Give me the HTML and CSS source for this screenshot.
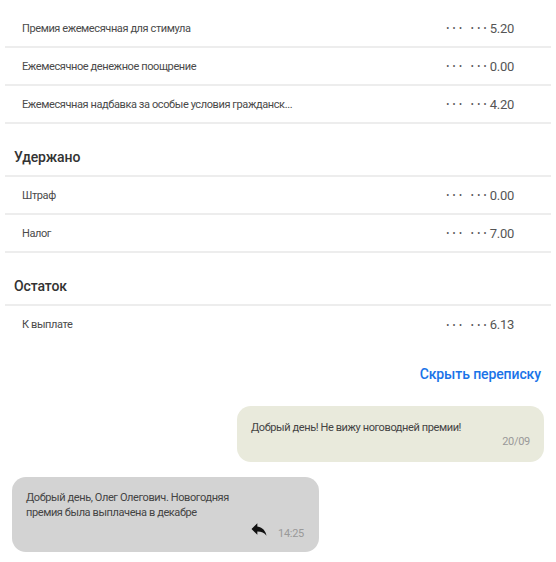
FILE: index.html
```html
<!DOCTYPE html>
<html lang="ru">
<head>
<meta charset="utf-8">
<link rel="stylesheet" href="styles.css">
</head>
<body>
<div class="page">
  <div class="list">
    <div class="row"><span class="label">Премия ежемесячная для стимула</span><span class="value"><span class="dots">••• •••</span>5.20</span></div>
    <div class="row"><span class="label">Ежемесячное денежное поощрение</span><span class="value"><span class="dots">••• •••</span>0.00</span></div>
    <div class="row"><span class="label">Ежемесячная надбавка за особые условия гражданск...</span><span class="value"><span class="dots">••• •••</span>4.20</span></div>
    <div class="heading">Удержано</div>
    <div class="row"><span class="label">Штраф</span><span class="value"><span class="dots">••• •••</span>0.00</span></div>
    <div class="row"><span class="label">Налог</span><span class="value"><span class="dots">••• •••</span>7.00</span></div>
    <div class="heading">Остаток</div>
    <div class="row last"><span class="label">К выплате</span><span class="value"><span class="dots">••• •••</span>6.13</span></div>
  </div>
  <div class="link-row"><a class="toggle">Скрыть переписку</a></div>
  <div class="chat">
    <div class="bubble out">
      <div class="text">Добрый день! Не вижу ноговодней премии!</div>
      <div class="meta"><span class="time">20/09</span></div>
    </div>
    <div class="bubble in">
      <div class="text narrow">Добрый день, Олег Олегович. Новогодняя премия была выплачена в декабре</div>
      <div class="meta">
        <svg class="reply" viewBox="0 0 24 24" width="20" height="20"><path d="M10 9V5l-7 7 7 7v-4.1c5 0 8.5 1.6 11 5.1-1-5-4-10-11-11z"/></svg>
        <span class="time">14:25</span>
      </div>
    </div>
  </div>
</div>
</body>
</html>
```
FILE: styles.css
```css
* { box-sizing: border-box; }
html, body { margin: 0; padding: 0; background: #fff; }
body { font-family: Roboto, "Noto Sans", sans-serif; color: #444; }
.page { width: 556px; padding: 10px 5px 0 5px; }
.list { display: flex; flex-direction: column; }
.row {
  height: 38px;
  display: flex;
  align-items: center;
  justify-content: space-between;
  padding: 0 37px 0 17px;
  border-bottom: 2px solid #ededed;
  font-size: 11px;
  letter-spacing: -0.4px;
}
.row.last { border-bottom: none; height: 37px; }
.label { color: #4a4a4a; }
.value { color: #555; font-size: 13px; letter-spacing: -0.3px; display: flex; align-items: center; }
.dots { font-size: 9px; letter-spacing: 3.3px; color: #555; }
.heading {
  padding: 23px 9px 8px;
  line-height: 20px;
  font-size: 14px;
  font-weight: 500;
  letter-spacing: -0.1px;
  color: #333;
  border-bottom: 2px solid #ededed;
}
.link-row { display: flex; justify-content: flex-end; padding: 20px 10px 0 0; }
.toggle { font-size: 14px; font-weight: 500; line-height: 22px; color: #1a73e8; letter-spacing: -0.1px; }
.chat { display: flex; flex-direction: column; gap: 15px; padding-top: 21px; }
.bubble { width: 307px; border-radius: 14px; font-size: 11px; letter-spacing: -0.4px; }
.bubble.out { align-self: flex-end; margin-right: 7px; background: #e9eadc; padding: 14px 14px 14px 14px; }
.bubble.in { align-self: flex-start; margin-left: 7px; background: #d3d3d3; padding: 13px 15px 12px 14px; }
.text { line-height: 16px; color: #444; }
.in .text { line-height: 15px; }
.narrow { max-width: 225px; }
.meta { display: flex; justify-content: flex-end; align-items: flex-end; gap: 9px; }
.in .meta { margin-top: 4px; height: 16px; }
.time { font-size: 11px; line-height: 12px; color: #999; letter-spacing: -0.3px; }
.reply { fill: #111; margin-bottom: 1px; }
```
